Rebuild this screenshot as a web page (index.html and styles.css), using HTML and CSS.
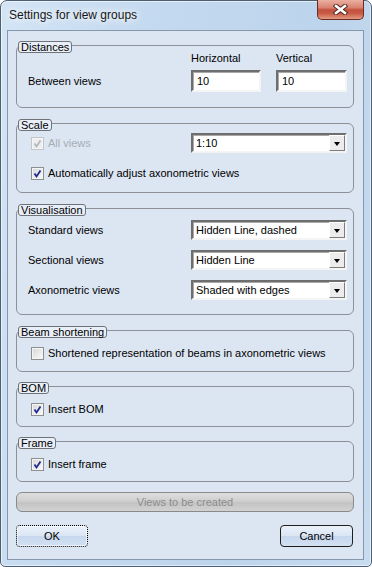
FILE: index.html
```html
<!DOCTYPE html>
<html lang="en">
<head>
    <meta charset="UTF-8">
    <title>Settings for view groups</title>
    <link rel="stylesheet" href="styles.css">
</head>
<body>
    <div class="window">
        <div class="titlebar">
            <span class="title">Settings for view groups</span>
            <div class="close-btn">
                <svg width="15" height="11" viewBox="0 0 15 11">
                    <path d="M3 2 L12 9 M12 2 L3 9" stroke="#4a2620" stroke-width="4.4" stroke-linecap="square"/>
                    <path d="M3 2 L12 9 M12 2 L3 9" stroke="#fff" stroke-width="2.6" stroke-linecap="square"/>
                </svg>
            </div>
        </div>

        <div class="client">
            <!-- Distances -->
            <div class="group g-dist">
                <span class="legend">Distances</span>
                <div class="dist-grid">
                    <span></span>
                    <span class="col-head">Horizontal</span>
                    <span class="col-head">Vertical</span>
                    <span class="row-label">Between views</span>
                    <div class="textbox">10</div>
                    <div class="textbox">10</div>
                </div>
            </div>

            <!-- Scale -->
            <div class="group g-scale">
                <span class="legend">Scale</span>
                <div class="row">
                    <label class="check disabled"><span class="box"><svg width="11" height="11" viewBox="0 0 11 11"><path d="M2.5 5.5 L4.5 8.5 L8.5 2.5" fill="none" stroke="#b4b8bd" stroke-width="1.8"/></svg></span>All views</label>
                    <div class="combo"><span class="combo-text">1:10</span><span class="combo-btn"></span></div>
                </div>
                <div class="row row-check">
                    <label class="check"><span class="box"><svg width="11" height="11" viewBox="0 0 11 11"><path d="M2.5 5.5 L4.5 8.5 L8.5 2.5" fill="none" stroke="#1e2a8e" stroke-width="1.8"/></svg></span>Automatically adjust axonometric views</label>
                </div>
            </div>

            <!-- Visualisation -->
            <div class="group g-vis">
                <span class="legend">Visualisation</span>
                <div class="row">
                    <span class="row-label">Standard views</span>
                    <div class="combo"><span class="combo-text">Hidden Line, dashed</span><span class="combo-btn"></span></div>
                </div>
                <div class="row">
                    <span class="row-label">Sectional views</span>
                    <div class="combo"><span class="combo-text">Hidden Line</span><span class="combo-btn"></span></div>
                </div>
                <div class="row">
                    <span class="row-label">Axonometric views</span>
                    <div class="combo"><span class="combo-text">Shaded with edges</span><span class="combo-btn"></span></div>
                </div>
            </div>

            <!-- Beam shortening -->
            <div class="group g-small g-beam">
                <span class="legend">Beam shortening</span>
                <label class="check"><span class="box"></span>Shortened representation of beams in axonometric views</label>
            </div>

            <!-- BOM -->
            <div class="group g-small">
                <span class="legend">BOM</span>
                <label class="check"><span class="box"><svg width="11" height="11" viewBox="0 0 11 11"><path d="M2.5 5.5 L4.5 8.5 L8.5 2.5" fill="none" stroke="#1e2a8e" stroke-width="1.8"/></svg></span>Insert BOM</label>
            </div>

            <!-- Frame -->
            <div class="group g-small">
                <span class="legend">Frame</span>
                <label class="check"><span class="box"><svg width="11" height="11" viewBox="0 0 11 11"><path d="M2.5 5.5 L4.5 8.5 L8.5 2.5" fill="none" stroke="#1e2a8e" stroke-width="1.8"/></svg></span>Insert frame</label>
            </div>

            <div class="progress">Views to be created</div>

            <div class="buttons">
                <button class="btn btn-ok">OK</button>
                <button class="btn">Cancel</button>
            </div>
        </div>
    </div>
</body>
</html>
```

FILE: styles.css
```css
body {
    margin: 0;
    font-family: "Liberation Sans", Arial, sans-serif;
    font-size: 11px;
    color: #000;
    background: #fff;
}
.window {
    position: relative;
    width: 372px;
    height: 567px;
    box-sizing: border-box;
    border: 1px solid #4f5f72;
    border-radius: 7px 7px 5px 5px;
    background: linear-gradient(100deg, #d3e4f5 0%, #c3d9ef 35%, #bcd4ec 70%, #c8dcf0 100%);
    box-shadow: inset 0 0 0 1px rgba(255, 255, 255, 0.55);
}
.titlebar {
    height: 29px;
    position: relative;
}
.title {
    position: absolute;
    left: 8px;
    top: 7px;
    font-size: 12px;
    color: #161616;
    text-shadow: 0 0 6px #fff, 0 0 10px #fff;
}
.close-btn {
    position: absolute;
    top: -1px;
    right: 7px;
    width: 47px;
    height: 20px;
    box-sizing: border-box;
    border: 1px solid #6b2a22;
    border-top: none;
    border-radius: 0 0 5px 5px;
    background: linear-gradient(#eab0a2 0%, #d98270 40%, #c2503c 52%, #c85a44 70%, #e39a82 100%);
    display: flex;
    align-items: center;
    justify-content: center;
}
.client {
    margin-left: 6px;
    width: 357px;
    height: 530px;
    box-sizing: border-box;
    border: 1px solid #8697ab;
    background: #dce6f3;
    padding: 14px 9px 0 8px;
}
.group {
    position: relative;
    box-sizing: border-box;
    width: 338px;
    border: 1px solid #8d9096;
    border-radius: 6px;
    margin-top: 15px;
    padding: 0 6px 0 11px;
}
.group:first-child {
    margin-top: 0;
}
.legend {
    position: absolute;
    top: -5px;
    left: 1px;
    height: 12px;
    box-sizing: border-box;
    line-height: 10px;
    padding: 0 2px;
    border: 1px solid #6f7276;
    border-radius: 3px;
    background: #e9eff8;
}
.g-dist {
    height: 63px;
    padding-top: 6px;
}
.dist-grid {
    display: grid;
    grid-template-columns: 148px 70px 71px;
    grid-template-rows: 13px 22px;
    column-gap: 15px;
    row-gap: 5px;
}
.col-head {
    line-height: 13px;
}
.row-label {
    align-self: center;
}
.textbox {
    box-sizing: border-box;
    height: 22px;
    background: #fff;
    border: 2px solid;
    border-color: #6e6e6e #f4f4f4 #f4f4f4 #6e6e6e;
    box-shadow: inset 1px 1px 0 #a9a9a9;
    padding-left: 4px;
    line-height: 18px;
}
.g-scale {
    height: 70px;
    padding-top: 9px;
}
.row {
    display: flex;
    justify-content: space-between;
    align-items: center;
    height: 20px;
}
.row-check {
    margin-top: 13px;
    height: 14px;
}
.g-vis {
    height: 107px;
    padding-top: 11px;
}
.g-vis .row + .row {
    margin-top: 10px;
}
.combo {
    position: relative;
    box-sizing: border-box;
    width: 156px;
    height: 20px;
    background: #fff;
    border: 2px solid;
    border-color: #6e6e6e #f4f4f4 #f4f4f4 #6e6e6e;
    box-shadow: inset 1px 1px 0 #a9a9a9;
    display: flex;
    align-items: center;
}
.combo-text {
    padding-left: 3px;
    line-height: 16px;
}
.combo-btn {
    position: absolute;
    right: 0;
    top: 0;
    width: 16px;
    height: 16px;
    box-sizing: border-box;
    background: #ececec;
    border: 1px solid;
    border-color: #fff #7d7d7d #7d7d7d #fff;
}
.combo-btn::after {
    content: "";
    position: absolute;
    left: 4px;
    top: 6px;
    border-left: 3.5px solid transparent;
    border-right: 3.5px solid transparent;
    border-top: 4px solid #000;
}
.check {
    display: flex;
    align-items: center;
    height: 14px;
    margin-left: 3px;
}
.box {
    box-sizing: border-box;
    width: 13px;
    height: 13px;
    margin-right: 4px;
    border: 1px solid #8e8f8f;
    background: linear-gradient(135deg, #d6d6d6, #fbfbfb);
    box-shadow: inset 0 0 0 1px #f4f4f4;
    display: flex;
    align-items: center;
    justify-content: center;
}
.check.disabled {
    color: #a7adb5;
}
.check.disabled .box {
    border-color: #c4c6c9;
    background: #eceef1;
}
.g-small {
    height: 41px;
    margin-top: 14px;
    padding-top: 15px;
}
.g-beam {
    height: 42px;
    margin-top: 15px;
}
.progress {
    width: 338px;
    box-sizing: border-box;
    height: 20px;
    margin-top: 10px;
    border: 1px solid #8a8a8a;
    border-radius: 6px;
    background: linear-gradient(#dedede 0%, #cfcfcf 45%, #c3c3c3 55%, #d2d2d2 100%);
    color: #8c8c8c;
    text-align: center;
    line-height: 18px;
}
.buttons {
    display: flex;
    justify-content: space-between;
    width: 337px;
    margin-top: 13px;
}
.btn {
    width: 73px;
    height: 22px;
    box-sizing: border-box;
    border: 1px solid #1e1e1e;
    border-radius: 4px;
    background: linear-gradient(#eaf1fa 0%, #dbe6f4 48%, #c7d8ee 52%, #d2e0f2 100%);
    font-family: "Liberation Sans", Arial, sans-serif;
    font-size: 11px;
    color: #000;
    padding: 0;
}
.btn-ok {
    width: 72px;
    border: 1px dotted #000;
    box-shadow: inset 0 0 0 1px rgba(255, 255, 255, 0.6);
}
```
